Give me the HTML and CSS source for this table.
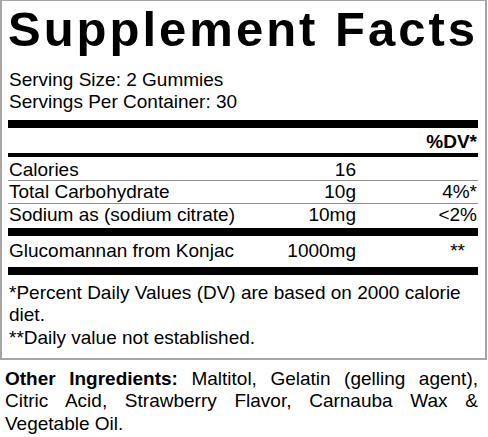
FILE: index.html
```html
<!DOCTYPE html>
<html lang="en">
<head>
    <meta charset="UTF-8">
    <meta name="viewport" content="width=device-width, initial-scale=1.0">
    <title>Supplement Facts</title>
    <link rel="stylesheet" href="styles.css">
</head>
<body>
    <div class="facts">
        <h1 class="title">Supplement Facts</h1>
        <div class="serving">
            <p>Serving Size: 2 Gummies</p>
            <p>Servings Per Container: 30</p>
        </div>
        <div class="bar"></div>
        <div class="row head">
            <span></span>
            <span></span>
            <span class="dv">%DV*</span>
        </div>
        <div class="bar mid"></div>
        <div class="row first">
            <span>Calories</span>
            <span class="amt">16</span>
            <span class="dv"></span>
        </div>
        <div class="row">
            <span>Total Carbohydrate</span>
            <span class="amt">10g</span>
            <span class="dv">4%*</span>
        </div>
        <div class="row last">
            <span>Sodium as (sodium citrate)</span>
            <span class="amt">10mg</span>
            <span class="dv">&lt;2%</span>
        </div>
        <div class="bar"></div>
        <div class="row blend">
            <span>Glucomannan from Konjac</span>
            <span class="amt">1000mg</span>
            <span class="dv stars">**</span>
        </div>
        <div class="bar"></div>
        <div class="notes">
            <p>*Percent Daily Values (DV) are based on 2000 calorie diet.</p>
            <p>**Daily value not established.</p>
        </div>
    </div>
    <p class="ingredients"><b>Other Ingredients:</b> Maltitol, Gelatin (gelling agent), Citric Acid, Strawberry Flavor, Carnauba Wax &amp; Vegetable Oil.</p>
</body>
</html>
```

FILE: styles.css
```css
*{
    margin: 0;
    padding: 0;
    box-sizing: border-box;
}
body{
    background: #fff;
    color: #000;
    font-family: "Liberation Sans", Arial, Helvetica, sans-serif;
    font-size: 19px;
}
.facts{
    width: 487px;
    border: 2px solid #a6a6a6;
    border-top-width: 1px;
    padding: 0 7px 9px 6px;
}
.title{
    font-size: 49px;
    font-weight: bold;
    line-height: 57px;
    letter-spacing: 3px;
    white-space: nowrap;
}
.serving{
    margin-top: 10.5px;
    padding-left: 1px;
    line-height: 22px;
}
.bar{
    height: 8px;
    margin-top: 7px;
    background: #000;
}
.bar.mid{
    height: 4px;
    margin-top: 0;
}
.row{
    display: grid;
    grid-template-columns: 1fr 110px 121px;
    line-height: 21px;
    padding: 0 1px 0.5px;
    border-bottom: 1px solid #8c8c8c;
}
.row .amt,
.row .dv{
    text-align: right;
}
.row.head{
    padding-top: 3px;
    border-bottom: none;
    line-height: 22px;
    font-weight: bold;
}
.row.first{
    padding-top: 1.5px;
}
.row.last{
    border-bottom: none;
    padding-bottom: 3px;
}
.row.last + .bar{
    margin-top: 0;
}
.row.blend{
    border-bottom: none;
    padding-top: 4.5px;
    padding-bottom: 6px;
}
.row.blend + .bar{
    margin-top: 0;
}
.row .stars{
    padding-right: 12px;
}
.notes{
    padding: 7px 1px 0;
    line-height: 22.3px;
}
.ingredients{
    margin-top: 8px;
    padding: 0 9px 0 5px;
    width: 487px;
    line-height: 22.5px;
    text-align: justify;
}
```
